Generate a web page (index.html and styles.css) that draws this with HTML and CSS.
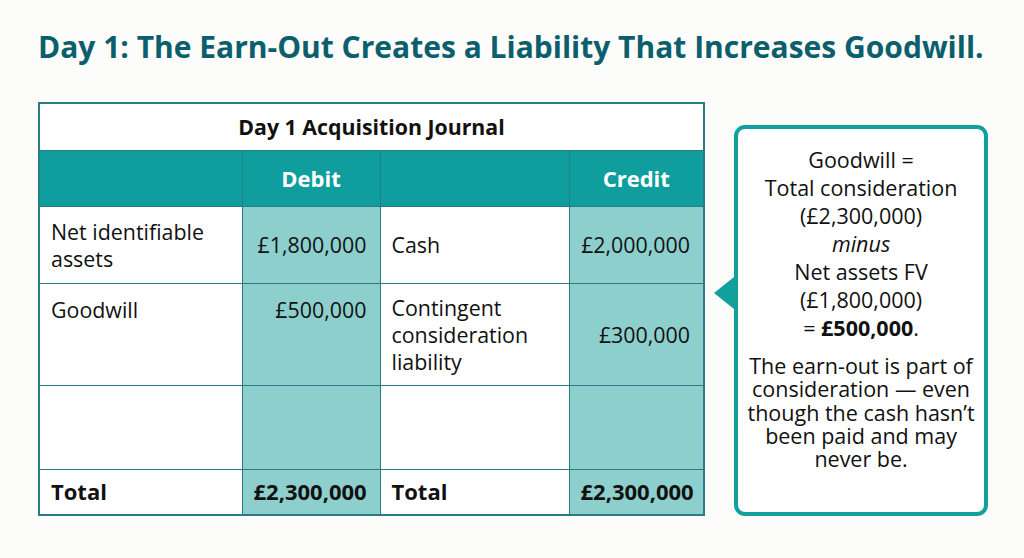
FILE: index.html
```html
<!DOCTYPE html>
<html>
<head>
<meta charset="utf-8">
<link rel="stylesheet" href="styles.css">
</head>
<body>
<div class="page">
  <h1 class="title">Day 1: The Earn-Out Creates a Liability That Increases Goodwill.</h1>
  <div class="content">
    <table class="journal">
      <colgroup>
        <col class="c1"><col class="c2"><col class="c3"><col class="c4">
      </colgroup>
      <tr class="r-cap"><th colspan="4" class="cap">Day 1 Acquisition Journal</th></tr>
      <tr class="r-head">
        <th class="hd"></th><th class="hd">Debit</th><th class="hd"></th><th class="hd">Credit</th>
      </tr>
      <tr class="r1">
        <td class="lbl mid">Net identifiable<br>assets</td>
        <td class="amt mid">£1,800,000</td>
        <td class="lbl mid">Cash</td>
        <td class="amt mid">£2,000,000</td>
      </tr>
      <tr class="r2">
        <td class="lbl top">Goodwill</td>
        <td class="amt top">£500,000</td>
        <td class="lbl mid">Contingent<br>consideration<br>liability</td>
        <td class="amt mid">£300,000</td>
      </tr>
      <tr class="r3">
        <td class="lbl"></td><td class="amt"></td><td class="lbl"></td><td class="amt"></td>
      </tr>
      <tr class="r-total">
        <td class="lbl strong">Total</td>
        <td class="amt strong">£2,300,000</td>
        <td class="lbl strong">Total</td>
        <td class="amt strong">£2,300,000</td>
      </tr>
    </table>
    <div class="callout">
      <div class="calc">
        <div>Goodwill =</div>
        <div>Total consideration</div>
        <div>(£2,300,000)</div>
        <div><em>minus</em></div>
        <div>Net assets FV</div>
        <div>(£1,800,000)</div>
        <div>= <strong>£500,000</strong>.</div>
      </div>
      <p class="note">The earn-out is part of consideration — even though the cash hasn’t been paid and may never be.</p>
    </div>
  </div>
</div>
</body>
</html>
```

FILE: styles.css
```css
* { box-sizing: border-box; }
html, body { margin: 0; padding: 0; }
body {
  background: #fcfcfa;
  font-family: "Open Sans", "Liberation Sans", sans-serif;
  color: #111;
  width: 1024px;
  height: 558px;
  overflow: hidden;
}
.page {
  padding: 29px 0 0 38px;
}
.title {
  margin: 0;
  font-size: 30px;
  font-weight: 700;
  line-height: 36px;
  color: #0b5f6c;
  white-space: nowrap;
}
.content {
  display: flex;
  align-items: flex-start;
  margin-top: 37px;
}
.journal {
  border-collapse: collapse;
  width: 665px;
  border: 2px solid #2a7b86;
  table-layout: fixed;
}
.c1 { width: 203px; }
.c2 { width: 138px; }
.c3 { width: 189px; }
.c4 { width: 135px; }
.journal th, .journal td {
  border: 1.5px solid #2a7b86;
  padding: 0 11px;
  font-size: 21.4px;
  line-height: 27px;
}
.journal td.amt { padding-right: 13px; }
.cap {
  background: #fff;
  height: 47px;
  font-weight: 700;
  text-align: center;
  font-size: 21.3px !important;
  color: #111;
}
.hd {
  background: #0f9d9d;
  color: #fff;
  height: 56px;
  font-weight: 700;
  font-size: 22px !important;
  text-align: center;
}
.r1 td { height: 77px; }
.r2 td { height: 102px; }
.r3 td { height: 84px; }
.r-total td { height: 46px; font-size: 22px; }
.lbl { background: #fff; text-align: left; }
.amt { background: #8ccfcc; text-align: right; }
.mid { vertical-align: middle; }
.top { vertical-align: top; padding-top: 12px !important; }
.strong { font-weight: 700; }

.callout {
  position: relative;
  margin-left: 29px;
  margin-top: 23px;
  width: 254px;
  height: 391px;
  border: 4px solid #12a09c;
  border-radius: 11px;
  background: #fff;
  text-align: center;
  padding: 17px 2px 0;
  font-size: 21.5px;
}
.callout::before {
  content: "";
  position: absolute;
  left: -24px;
  top: 148px;
  border-style: solid;
  border-width: 16px 20px 16px 0;
  border-color: transparent #12a09c transparent transparent;
}
.calc div {
  line-height: 28px;
}
.note {
  margin: 12px 0 0;
  line-height: 23.3px;
}
```
